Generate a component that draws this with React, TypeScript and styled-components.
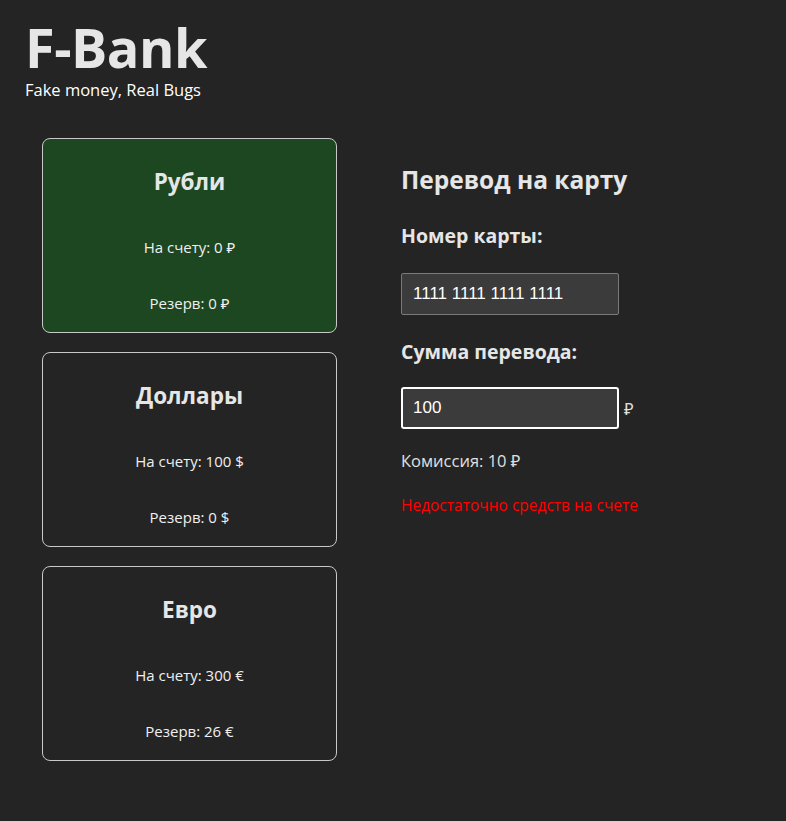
import React from "react";
import styled, { createGlobalStyle } from "styled-components";

const Global = createGlobalStyle`
  html, body { margin: 0; padding: 0; background: #242424; }
  body {
    font-family: "Open Sans", "Noto Sans", sans-serif;
    color: rgba(255,255,255,0.87);
    min-height: 821px;
  }
`;

const Page = styled.div`
  padding: 0 0 40px 0;
`;

const Header = styled.header`
  padding: 19px 0 0 25px;
  display: flex;
  flex-direction: column;
`;

const Logo = styled.h1`
  margin: 0;
  font-size: 54px;
  line-height: 56px;
  font-weight: 700;
  color: #e6e6e6;
  letter-spacing: -0.5px;
`;

const Tagline = styled.div`
  font-size: 16.5px;
  line-height: 20px;
  color: #ffffff;
  margin-top: 5px;
`;

const Main = styled.main`
  display: flex;
  gap: 64px;
  padding: 38px 0 0 42px;
  align-items: flex-start;
`;

const Cards = styled.div`
  display: flex;
  flex-direction: column;
  gap: 19px;
`;

const Card = styled.div<{ $active?: boolean }>`
  box-sizing: border-box;
  width: 295px;
  height: 195px;
  border: 1px solid #c8c8c8;
  border-radius: 8px;
  background: ${(p) => (p.$active ? "#1d4720" : "transparent")};
  display: flex;
  flex-direction: column;
  align-items: center;
  padding-top: 28px;
`;

const CardTitle = styled.div`
  font-size: 22.5px;
  line-height: 30px;
  font-weight: 700;
  color: #e6e6e6;
`;

const CardLine = styled.div<{ $first?: boolean }>`
  font-size: 15px;
  line-height: 20px;
  color: #f0f0f0;
  margin-top: ${(p) => (p.$first ? "40px" : "36px")};
`;

const Transfer = styled.section`
  display: flex;
  flex-direction: column;
  padding-top: 26px;
`;

const Heading = styled.h2`
  margin: 0;
  font-size: 24.5px;
  line-height: 32px;
  font-weight: 700;
  color: #e6e6e6;
`;

const Label = styled.div<{ $mt: number }>`
  font-size: 19.5px;
  line-height: 24px;
  font-weight: 700;
  color: #e6e6e6;
  margin-top: ${(p) => p.$mt}px;
`;

const InputRow = styled.div<{ $mt: number }>`
  display: flex;
  align-items: center;
  gap: 5px;
  margin-top: ${(p) => p.$mt}px;
`;

const Input = styled.div<{ $focused?: boolean }>`
  box-sizing: border-box;
  width: 218px;
  height: 42px;
  background: #3b3b3b;
  border: ${(p) => (p.$focused ? "2px solid #ffffff" : "1px solid #7a7a7a")};
  border-radius: ${(p) => (p.$focused ? "3px" : "2px")};
  padding-left: ${(p) => (p.$focused ? "10px" : "11px")};
  display: flex;
  align-items: center;
  font-family: "Liberation Sans", Arial, sans-serif;
  font-size: 17px;
  color: #ffffff;
`;

const Currency = styled.span`
  font-size: 16.5px;
  color: #e0e0e0;
`;

const Note = styled.div<{ $error?: boolean }>`
  font-size: ${(p) => (p.$error ? "15.5px" : "16.5px")};
  line-height: 22px;
  margin-top: ${(p) => (p.$error ? "22px" : "21px")};
  color: ${(p) => (p.$error ? "#ff0000" : "#e0e0e0")};
`;

const accounts = [
  { title: "Рубли", balance: "0 ₽", reserve: "0 ₽", active: true },
  { title: "Доллары", balance: "100 $", reserve: "0 $", active: false },
  { title: "Евро", balance: "300 €", reserve: "26 €", active: false },
];

export default function App() {
  return (
    <Page>
      <Global />
      <Header>
        <Logo>F-Bank</Logo>
        <Tagline>Fake money, Real Bugs</Tagline>
      </Header>
      <Main>
        <Cards>
          {accounts.map((a) => (
            <Card key={a.title} $active={a.active}>
              <CardTitle>{a.title}</CardTitle>
              <CardLine $first>На счету: {a.balance}</CardLine>
              <CardLine>Резерв: {a.reserve}</CardLine>
            </Card>
          ))}
        </Cards>
        <Transfer>
          <Heading>Перевод на карту</Heading>
          <Label $mt={28}>Номер карты:</Label>
          <InputRow $mt={25}>
            <Input>1111 1111 1111 1111</Input>
          </InputRow>
          <Label $mt={25}>Сумма перевода:</Label>
          <InputRow $mt={23}>
            <Input $focused>100</Input>
            <Currency>₽</Currency>
          </InputRow>
          <Note>Комиссия: 10 ₽</Note>
          <Note $error>Недостаточно средств на счете</Note>
        </Transfer>
      </Main>
    </Page>
  );
}
